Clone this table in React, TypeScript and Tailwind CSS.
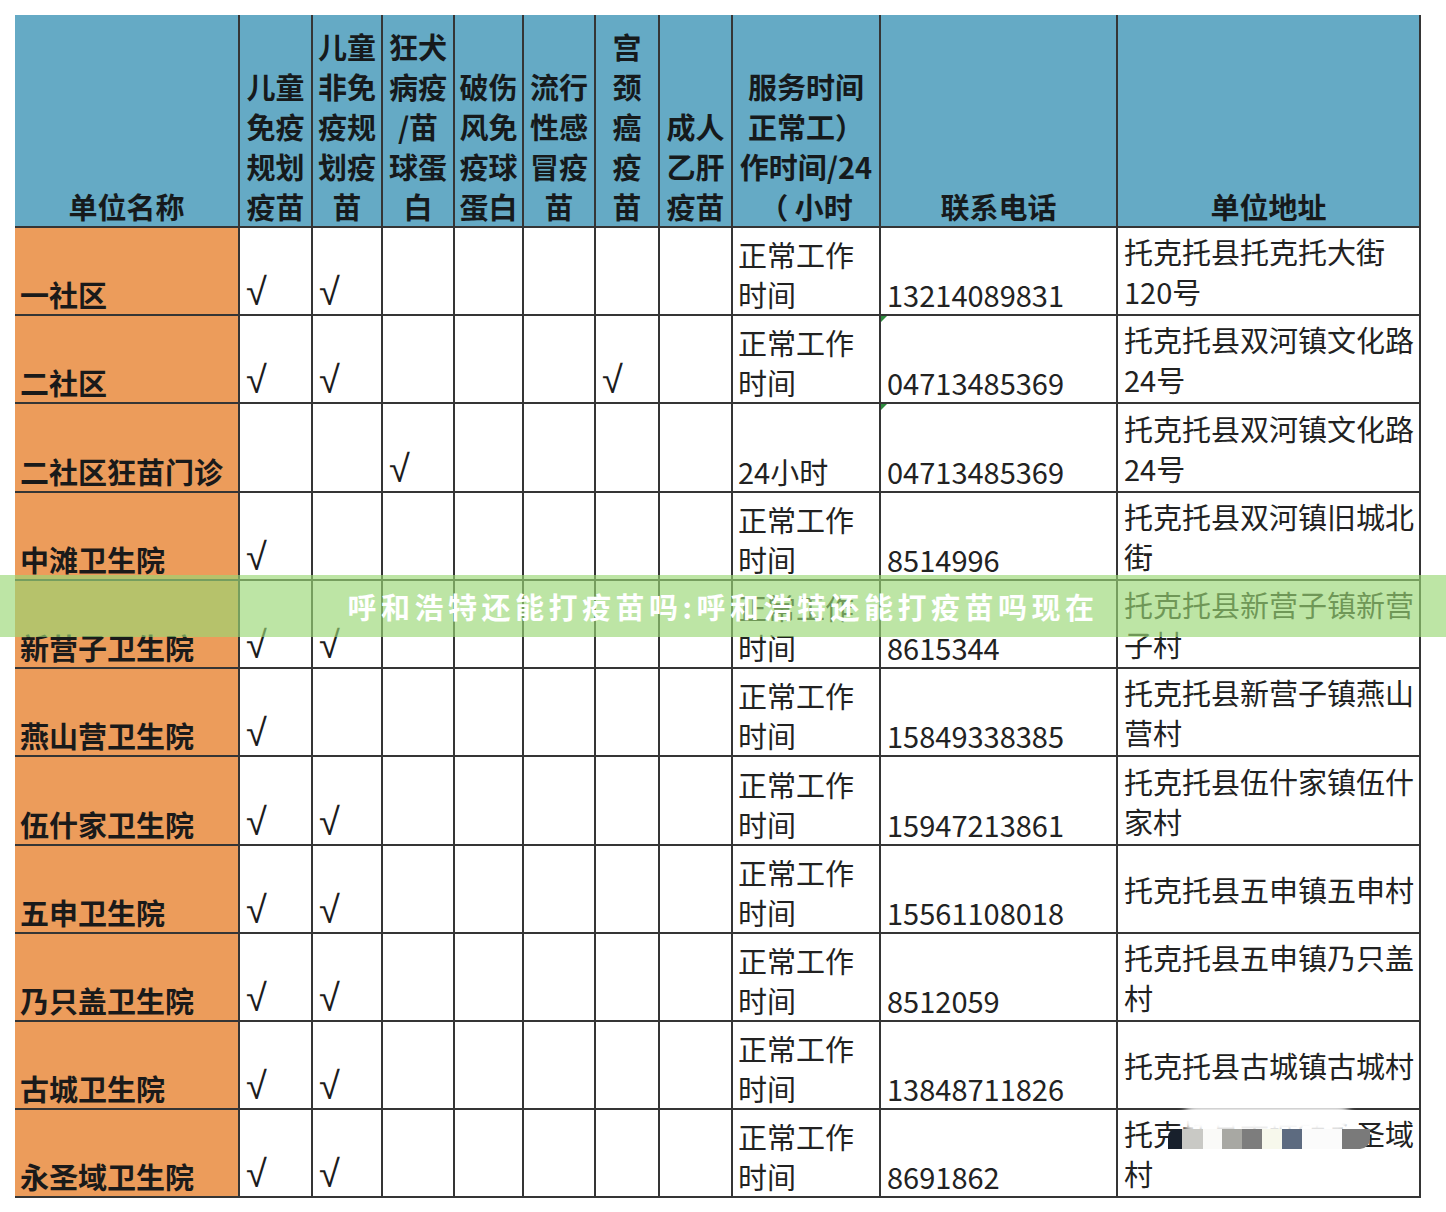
import { memo } from 'react'

const COLS =
	'grid-cols-[225px_73px_70px_72px_69px_72px_64px_73px_148px_237px_303px]'

const headers: string[][] = [
	['单位名称'],
	['儿童', '免疫', '规划', '疫苗'],
	['儿童', '非免', '疫规', '划疫', '苗'],
	['狂犬', '病疫', '/苗', '球蛋', '白'],
	['破伤', '风免', '疫球', '蛋白'],
	['流行', '性感', '冒疫', '苗'],
	['宫', '颈', '癌', '疫', '苗'],
	['成人', '乙肝', '疫苗'],
	['服务时间', '正常工）', '作时间/24', '（ 小时'],
	['联系电话'],
	['单位地址'],
]

type Row = {
	name: string
	checks: number[] // column indexes 1..7 with a tick
	time: string[]
	phone: string
	flag?: boolean
	address: string[]
	tall?: boolean
}

const WORK = ['正常工作', '时间']

const rows: Row[] = [
	{ name: '一社区', checks: [1, 2], time: WORK, phone: '13214089831', address: ['托克托县托克托大街', '120号'] },
	{ name: '二社区', checks: [1, 2, 6], time: WORK, phone: '04713485369', flag: true, address: ['托克托县双河镇文化路', '24号'] },
	{ name: '二社区狂苗门诊', checks: [3], time: ['24小时'], phone: '04713485369', flag: true, address: ['托克托县双河镇文化路', '24号'], tall: true },
	{ name: '中滩卫生院', checks: [1], time: WORK, phone: '8514996', address: ['托克托县双河镇旧城北', '街'] },
	{ name: '新营子卫生院', checks: [1, 2], time: WORK, phone: '8615344', address: ['托克托县新营子镇新营', '子村'] },
	{ name: '燕山营卫生院', checks: [1], time: WORK, phone: '15849338385', address: ['托克托县新营子镇燕山', '营村'] },
	{ name: '伍什家卫生院', checks: [1, 2], time: WORK, phone: '15947213861', address: ['托克托县伍什家镇伍什', '家村'], tall: true },
	{ name: '五申卫生院', checks: [1, 2], time: WORK, phone: '15561108018', address: ['托克托县五申镇五申村'] },
	{ name: '乃只盖卫生院', checks: [1, 2], time: WORK, phone: '8512059', address: ['托克托县五申镇乃只盖', '村'] },
	{ name: '古城卫生院', checks: [1, 2], time: WORK, phone: '13848711826', address: ['托克托县古城镇古城村'] },
	{ name: '永圣域卫生院', checks: [1, 2], time: WORK, phone: '8691862', address: ['托克托县古城镇永圣域', '村'] },
]

const cell = 'border-r-2 border-b-2 border-[#353535]'

const Lines = ({ lines }: { lines: string[] }) => (
	<>
		{lines.map((l, i) => (
			<div key={i} className="whitespace-pre">
				{l}
			</div>
		))}
	</>
)

// blurred watermark over the bottom right corner
const Watermark = () => (
	<div className="absolute left-[1160px] top-[1104px] h-[60px] w-[220px]">
		<div className="absolute left-[22px] top-[2px] h-[26px] w-[170px] rounded-full bg-white blur-[3px]" />
		<div className="absolute left-[24px] top-[40px] h-[14px] w-[160px] rounded-full bg-white/70 blur-[3px]" />
		<div className="absolute left-[8px] top-[25px] flex h-[20px]">
			<div className="w-[14px] rounded-tl-[8px] bg-[#18202c]" />
			<div className="w-[21px] bg-[#c9c9c5]" />
			<div className="w-[19px] bg-[#fafaf8]" />
			<div className="w-[20px] bg-[#a8a8a3]" />
			<div className="w-[20px] bg-[#7d7d7d]" />
			<div className="w-[20px] bg-[#f7f8ec]" />
			<div className="w-[20px] bg-[#5d6b80]" />
			<div className="w-[40px] bg-[#fbfbfb]" />
			<div className="w-[28px] rounded-br-[10px] bg-[#7a7a7a]" />
		</div>
	</div>
)

const App = () => {
	return (
		<div
			className="relative h-[1212px] w-[1446px] overflow-hidden bg-white text-[#222]"
			style={{ fontFamily: '"Noto Sans CJK SC", "Noto Sans", sans-serif' }}
		>
			<div className="pl-[15px] pt-[15px]">
				<div className={`grid w-[1406px] ${COLS} text-[29px] leading-[40px]`}>
					{/* header */}
					{headers.map((h, i) => (
						<div
							key={i}
							className={`${cell} flex h-[213px] flex-col items-center justify-end bg-[#65aac5] font-bold text-[#161a1c]`}
						>
							<Lines lines={h} />
						</div>
					))}

					{rows.map((r, ri) => {
						const h = r.tall ? 'h-[89px]' : 'h-[88px]'
						return (
							<div key={ri} className="contents">
								<div className={`${cell} ${h} flex items-end bg-[#ec9c5b] pl-[5px] font-bold text-[#1a1a1a]`}>
									{r.name}
								</div>
								{[1, 2, 3, 4, 5, 6, 7].map((c) => (
									<div
										key={c}
										className={`${cell} ${h} flex items-end pb-[3px] pl-[6px] font-['Liberation_Sans',sans-serif] text-[38px] leading-none text-[#1c1c1c]`}
									>
										{r.checks.includes(c) ? '√' : ''}
									</div>
								))}
								<div className={`${cell} ${h} flex flex-col justify-end pl-[5px]`}>
									<Lines lines={r.time} />
								</div>
								<div className={`${cell} ${h} relative flex items-end pl-[6px]`}>
									{r.flag && (
										<div className="absolute left-0 top-0 h-0 w-0 border-r-[6px] border-t-[6px] border-r-transparent border-t-[#2e8b3e]" />
									)}
									{r.phone}
								</div>
								<div className={`${cell} ${h} flex flex-col justify-center pl-[6px]`}>
									<Lines lines={r.address} />
								</div>
							</div>
						)
					})}
				</div>
			</div>

			{/* title banner across the sheet */}
			<div className="absolute left-0 top-[575px] flex h-[62px] w-full items-center justify-center bg-[rgba(153,215,117,0.65)]">
				<span
					className="text-[29px] font-bold leading-none tracking-[4.5px] text-white"
					style={{ fontFamily: '"Noto Sans CJK SC", sans-serif' }}
				>
					呼和浩特还能打疫苗吗:呼和浩特还能打疫苗吗现在
				</span>
			</div>

			<Watermark />
		</div>
	)
}

export default memo(App)
